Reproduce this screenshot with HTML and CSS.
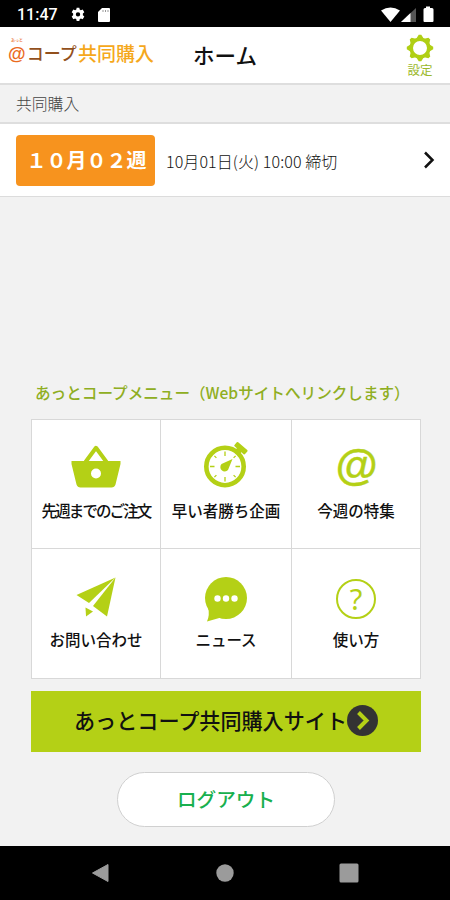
FILE: index.html
```html
<!DOCTYPE html>
<html lang="ja">
<head>
    <meta charset="UTF-8">
    <meta name="viewport" content="width=device-width, initial-scale=1.0">
    <title>ホーム</title>
    <link rel="stylesheet" href="styles.css">
</head>
<body>
    <div class="status-bar">
        <span class="time">11:47</span>
        <svg class="status-gear" width="16" height="16" viewBox="0 0 24 24">
            <path fill="#fff" fill-rule="evenodd" d="M10 1h4l.5 2.800 1.800 1L19 3.800l2.500 4-2.200 1.900v2.600l2.200 1.900-2.500 4-2.700-1-1.800 1L14 21h-4l-.5-2.800-1.800-1-2.700 1-2.500-4 2.200-1.900V9.700L2.500 7.800l2.500-4 2.700 1 1.800-1zM12 7.700a3.300 3.300 0 1 0 0 6.600a3.300 3.300 0 0 0 0-6.600z"/>
        </svg>
        <svg class="status-card" width="12" height="14" viewBox="0 0 12 14">
            <path fill="#fff" d="M4 0h7q1 0 1 1v12q0 1-1 1H1q-1 0-1-1V4z"/>
            <path stroke="#999" d="M5 2v2M7.500 2v2M10 2v2"/>
        </svg>
        <svg class="status-right" width="54" height="17" viewBox="0 0 54 17">
            <path fill="#fff" d="M0 4.500Q9.500-1.500 19 4.500L9.500 16z"/>
            <path fill="#555" d="M20 16L35 2v14z"/>
            <path fill="#fff" d="M20 16L29.500 7v9z"/>
            <path fill="#fff" d="M45 0.500h4V2h2q1.500 0 1.500 1.500V15q0 1-1 1h-8q-1 0-1-1V3.500Q42.500 2 44 2h1z"/>
        </svg>
    </div>

    <header class="header">
        <div class="logo">
            <div class="logo-mark">
                <span class="logo-ruby">あっと</span>
                <span class="logo-at">@</span>
            </div>
            <span class="logo-coop">コープ</span>
            <span class="logo-kyodo">共同購入</span>
        </div>
        <h1 class="page-title">ホーム</h1>
        <a class="settings">
            <svg width="28" height="28" viewBox="-14 -14 28 28">
                <circle r="8.800" fill="none" stroke="#b0cf14" stroke-width="3.600"/>
                <g fill="#b0cf14">
                    <path id="tooth" d="M-3.600-9.500L-1.300-13.200h2.600L3.600-9.500z"/>
                    <use href="#tooth" transform="rotate(45)"/>
                    <use href="#tooth" transform="rotate(90)"/>
                    <use href="#tooth" transform="rotate(135)"/>
                    <use href="#tooth" transform="rotate(180)"/>
                    <use href="#tooth" transform="rotate(225)"/>
                    <use href="#tooth" transform="rotate(270)"/>
                    <use href="#tooth" transform="rotate(315)"/>
                </g>
            </svg>
            <span>設定</span>
        </a>
    </header>

    <div class="section-title">共同購入</div>
    <div class="order-row">
        <span class="week">１０月０２週</span>
        <span class="deadline">10月01日(火) 10:00 締切</span>
        <svg class="arrow" width="12" height="18" viewBox="0 0 12 18">
            <path d="M2 1.500L9.500 9 2 16.500" fill="none" stroke="#111" stroke-width="2.500"/>
        </svg>
    </div>

    <main class="main">
        <h2 class="menu-title">あっとコープメニュー（Webサイトへリンクします）</h2>
        <div class="menu">
            <a class="menu-item">
                <svg width="50" height="46" viewBox="0 0 50 46">
                    <path d="M14.500 18L25 3.800 35.500 18" fill="none" stroke="#b4d016" stroke-width="4" stroke-linejoin="round"/>
                    <path fill="#b4d016" fill-rule="evenodd" d="M.5 17h49v3l-5 20.500q-1 3-4 3h-31q-3 0-4-3L.5 20zM25 24.500a5 5 0 1 0 0 10a5 5 0 1 0 0-10z"/>
                </svg>
                <span class="narrow">先週までのご注文</span>
            </a>
            <a class="menu-item">
                <svg width="50" height="46" viewBox="0 0 50 46">
                    <circle cx="24" cy="22.500" r="18.700" fill="none" stroke="#b4d016" stroke-width="4.600"/>
                    <g transform="rotate(41 24 22.500)" fill="#b4d016">
                        <rect x="21" y="-1" width="6" height="4"/>
                        <rect x="17" y="-4.500" width="14" height="5.500" rx="1"/>
                    </g>
                    <path d="M24 7.500v4.500M24 33v4.500M9 22.500h4.500M34.500 22.500H39M13.400 11.900l2 2M34.600 33.100l-2-2M13.400 33.100l2-2M34.600 11.900l-2 2" stroke="#b4d016" stroke-width="1.300"/>
                    <path fill="#b4d016" d="M31.500 15L20.500 20a4.200 4.200 0 1 0 6.500 6z"/>
                </svg>
                <span>早い者勝ち企画</span>
            </a>
            <a class="menu-item">
                <b class="at-icon">@</b>
                <span>今週の特集</span>
            </a>
            <a class="menu-item">
                <svg width="50" height="46" viewBox="0 0 50 46">
                    <g fill="#b4d016">
                        <path d="M44.500 4.500L5.500 22l12.500 8z"/>
                        <path d="M44.500 4.500L22 33l14 10.500z"/>
                        <path d="M14.500 34.500l7.500 4-7 5z"/>
                    </g>
                </svg>
                <span>お問い合わせ</span>
            </a>
            <a class="menu-item">
                <svg width="50" height="46" viewBox="0 0 50 46">
                    <circle cx="25" cy="25" r="21" fill="#b4d016"/>
                    <path fill="#b4d016" d="M7 34Q9 42 6 48.500L20 44.500z"/>
                    <g fill="#fff">
                        <circle cx="16.500" cy="25.500" r="3.200"/>
                        <circle cx="25" cy="25.500" r="3.200"/>
                        <circle cx="33.500" cy="25.500" r="3.200"/>
                    </g>
                </svg>
                <span>ニュース</span>
            </a>
            <a class="menu-item">
                <b class="help-icon">?</b>
                <span>使い方</span>
            </a>
        </div>

        <a class="site-btn">
            <span>あっとコープ共同購入サイト</span>
            <svg width="31" height="31" viewBox="0 0 31 31">
                <circle cx="15.500" cy="15.500" r="15.500" fill="#333"/>
                <path d="M11.500 7.500l8 8-8 8" fill="none" stroke="#b4d016" stroke-width="4"/>
            </svg>
        </a>
        <button class="logout-btn">ログアウト</button>
    </main>

    <nav class="nav-bar">
        <svg width="20" height="20" viewBox="0 0 20 20"><path d="M1.500 10L17 1.500v17z" fill="#9b9b9b" stroke="#9b9b9b" stroke-linejoin="round"/></svg>
        <svg width="20" height="20" viewBox="0 0 20 20"><circle cx="10" cy="10" r="8.700" fill="#9b9b9b"/></svg>
        <svg width="20" height="20" viewBox="0 0 20 20"><rect x=".5" y=".5" width="19" height="19" rx="1.500" fill="#9b9b9b"/></svg>
    </nav>
</body>
</html>
```
FILE: styles.css
```css
* {
    margin: 0;
    padding: 0;
    box-sizing: border-box;
}
body {
    height: 900px;
    display: flex;
    flex-direction: column;
    background: #f2f2f2;
    color: #111;
    font-family: "Noto Sans CJK JP", sans-serif;
    overflow: hidden;
}
svg {
    display: block;
    overflow: visible;
}
.status-bar {
    height: 27px;
    display: flex;
    align-items: center;
    background: #000;
    padding: 2px 15px 0 17px;
}
.time {
    width: 53px;
    color: #fff;
    font: 500 16px Roboto, sans-serif;
}
.status-card {
    margin-left: 12px;
}
.status-right {
    margin-left: auto;
}
.header {
    height: 58px;
    display: grid;
    grid-template-columns: 154px 1fr 154px;
    align-items: center;
    background: #fff;
    border-bottom: 2px solid #dedede;
}
.logo {
    display: flex;
    align-items: center;
    padding: 0 0 4px 8px;
    line-height: 24px;
    font-weight: 500;
    white-space: nowrap;
}
.logo-mark {
    width: 19px;
    display: flex;
    flex-direction: column;
    padding-bottom: 4px;
    color: #ea6a1e;
}
.logo-ruby {
    padding-left: 3px;
    font-size: 4px;
    line-height: 6px;
}
.logo-at {
    font: bold 18px/22px "Liberation Sans", Arial, sans-serif;
}
.logo-coop {
    width: 52px;
    color: #92501c;
    font-size: 17px;
}
.logo-kyodo {
    color: #f5a81c;
    font-size: 19px;
}
.page-title {
    text-align: center;
    font-size: 21.500px;
    font-weight: 500;
    line-height: 30px;
}
.settings {
    justify-self: end;
    display: flex;
    flex-direction: column;
    align-items: center;
    padding: 1px 16px 0 0;
    color: #9bb82a;
    font-size: 12.500px;
    line-height: 15px;
}
.section-title {
    height: 39px;
    padding-left: 16px;
    border-bottom: 2px solid #dedede;
    color: #444;
    font-size: 15.800px;
    font-weight: 300;
    line-height: 37px;
}
.order-row {
    height: 73px;
    display: flex;
    align-items: center;
    background: #fff;
    border-bottom: 1px solid #dcdcdc;
    padding: 0 15px 0 16px;
}
.week {
    width: 139px;
    height: 51px;
    padding-left: 2px;
    border-radius: 4px;
    background: #f7931e;
    color: #fff;
    font-size: 20px;
    font-weight: 700;
    line-height: 50px;
    text-align: center;
}
.deadline {
    margin-left: 11px;
    padding-top: 2px;
    font-size: 16px;
    font-weight: 300;
    letter-spacing: .1px;
}
.arrow {
    margin-left: auto;
}
.main {
    height: 649px;
    display: flex;
    flex-direction: column;
    align-items: center;
    padding: 183px 0 0 2px;
}
.menu-title {
    width: 390px;
    height: 39px;
    padding-left: 4px;
    color: #8fae22;
    font-size: 15.600px;
    font-weight: 500;
    line-height: 25px;
    white-space: nowrap;
}
.menu {
    width: 390px;
    height: 260px;
    display: grid;
    grid-template-columns: 128px 130px 128px;
    grid-template-rows: 128px 129px;
    gap: 1px;
    background: #d8d8d8;
    border: 1px solid #d8d8d8;
}
.menu-item {
    display: flex;
    flex-direction: column;
    align-items: center;
    background: #fff;
    padding-top: 24px;
    font-size: 15.500px;
    font-weight: 500;
    line-height: 22px;
    white-space: nowrap;
}
.menu-item span {
    margin-top: 9px;
}
.menu-item .narrow {
    letter-spacing: -1.900px;
}
.at-icon {
    height: 46px;
    color: #b4d016;
    font: italic bold 43px/42px "Liberation Sans", Arial, sans-serif;
    -webkit-text-stroke: .4px #b4d016;
}
.help-icon {
    width: 40px;
    height: 40px;
    margin: 6px 0 0;
    border: 2px solid #b4d016;
    border-radius: 50%;
    color: #b4d016;
    font: 400 29px/36px "Noto Sans", sans-serif;
    text-align: center;
}
.site-btn {
    width: 390px;
    height: 61px;
    display: flex;
    align-items: center;
    justify-content: center;
    margin-top: 12px;
    background: #b4d016;
    font-size: 21.100px;
    font-weight: 500;
}
.site-btn span {
    padding-bottom: 3px;
}
.site-btn svg {
    margin-top: -2px;
}
.logout-btn {
    width: 218px;
    height: 55px;
    margin-top: 20px;
    padding-bottom: 2px;
    border: 1px solid #d0d0d0;
    border-radius: 28px;
    background: #fff;
    color: #18b04e;
    font: 500 19.600px "Noto Sans CJK JP", sans-serif;
}
.nav-bar {
    height: 54px;
    display: flex;
    align-items: center;
    justify-content: center;
    gap: 104px;
    background: #000;
}
```
